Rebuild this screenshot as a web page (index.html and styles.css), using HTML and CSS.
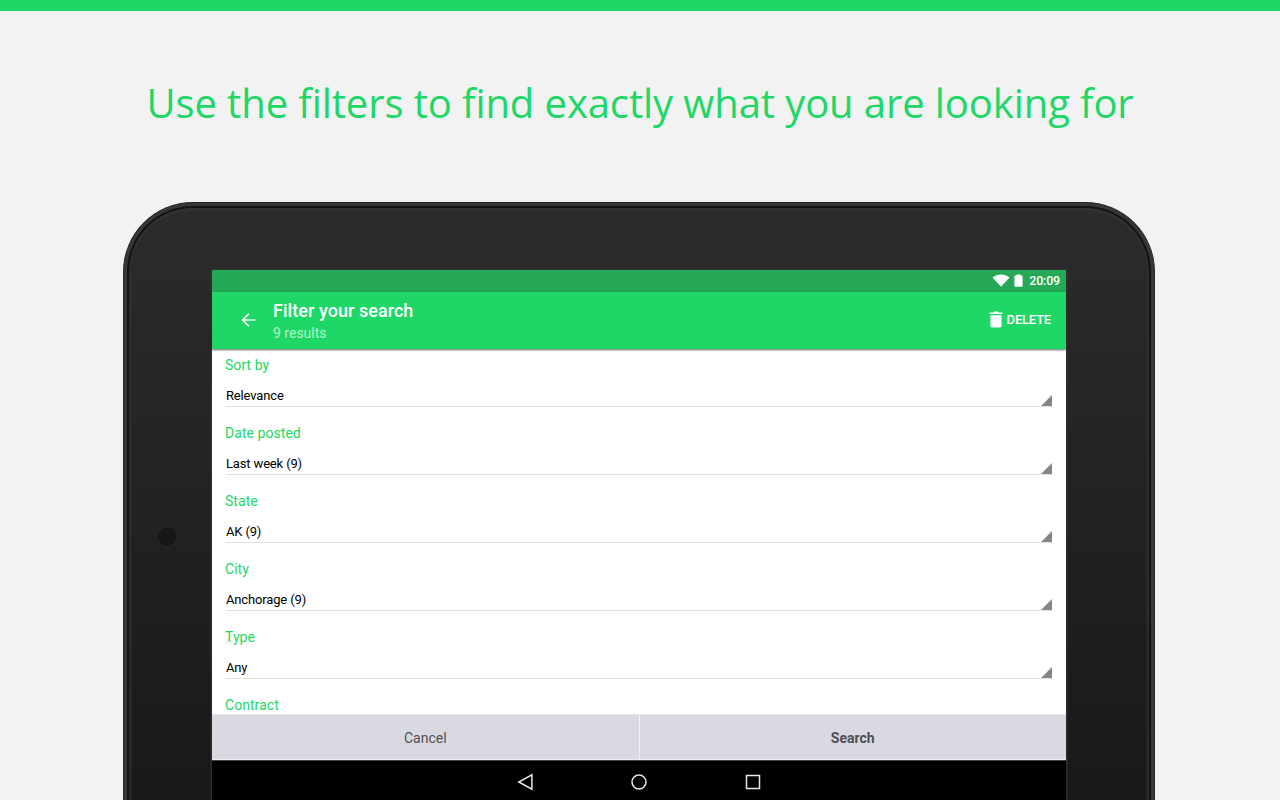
FILE: index.html
```html
<!DOCTYPE html>
<html lang="en">
  <head>
    <meta charset="UTF-8" />
    <meta name="viewport" content="width=device-width, initial-scale=1" />
    <title>Filter your search</title>
    <link rel="stylesheet" href="styles.css">
  </head>
  <body>
    <h1>Use the filters to find exactly what you are looking for</h1>

    <div class="tablet">
      <div class="bezel">
        <div class="camera"></div>

        <div class="screen">
          <div class="status-bar">
            <svg class="wifi" width="18" height="13" viewBox="0 0 18 13">
              <path d="M0.5 3.4C5.5-0.5 12.5-0.5 17.5 3.4L9 12.8z" fill="#fff" />
            </svg>
            <svg class="battery" width="9" height="13" viewBox="0 0 9 13">
              <path d="M2.4 0.4h4.2v1.1H8a0.6 0.6 0 0 1 0.6 0.6v10a0.6 0.6 0 0 1-0.6 0.6H1a0.6 0.6 0 0 1-0.6-0.6v-10A0.6 0.6 0 0 1 1 1.5h1.4z" fill="#fff" />
            </svg>
            <span>20:09</span>
          </div>

          <header class="toolbar">
            <svg class="back" width="16" height="16" viewBox="0 0 16 16" fill="none" stroke="#fff" stroke-width="1.7">
              <path d="M14.4 8H1.8M7.8 1.8L1.6 8l6.2 6.2" />
            </svg>
            <div class="titles">
              <h2>Filter your search</h2>
              <p>9 results</p>
            </div>
            <button class="delete">
              <svg width="14" height="17" viewBox="0 0 14 17" fill="#fff">
                <path d="M0.5 1.4h3.8L5.2 0.5h3.6l0.9 0.9h3.8v1.7H0.5zM1.4 4.2h11.2v10.6a1.7 1.7 0 0 1-1.7 1.7H3.1a1.7 1.7 0 0 1-1.7-1.7z" />
              </svg>
              DELETE
            </button>
          </header>

          <main class="filters">
            <div class="filter">
              <div class="label">Sort by</div>
              <div class="spinner"><span>Relevance</span></div>
            </div>
            <div class="filter">
              <div class="label">Date posted</div>
              <div class="spinner"><span>Last week (9)</span></div>
            </div>
            <div class="filter">
              <div class="label">State</div>
              <div class="spinner"><span>AK (9)</span></div>
            </div>
            <div class="filter">
              <div class="label">City</div>
              <div class="spinner"><span>Anchorage (9)</span></div>
            </div>
            <div class="filter">
              <div class="label">Type</div>
              <div class="spinner"><span>Any</span></div>
            </div>
            <div class="filter">
              <div class="label">Contract</div>
            </div>
          </main>

          <div class="actions">
            <button>Cancel</button>
            <button class="search">Search</button>
          </div>

          <nav class="nav-bar">
            <svg width="18" height="18" viewBox="0 0 18 18">
              <path d="M15.9 1.8v14.4L2.8 9z" />
            </svg>
            <svg width="18" height="18" viewBox="0 0 18 18">
              <circle cx="9" cy="9" r="7" />
            </svg>
            <svg width="18" height="18" viewBox="0 0 18 18">
              <rect x="2.5" y="2.5" width="13" height="13" />
            </svg>
          </nav>
        </div>
      </div>
    </div>
  </body>
</html>
```

FILE: styles.css
```css
* {
  box-sizing: border-box;
}

body {
  margin: 0;
  border-top: 11px solid #1ed766;
  background: #f2f2f2;
  font-family: Roboto, sans-serif;
}

h1,
h2,
p {
  margin: 0;
  font-weight: 400;
}

h1 {
  height: 191px;
  padding-top: 64px;
  font-family: "Open Sans", sans-serif;
  font-size: 40px;
  line-height: 56px;
  letter-spacing: -0.1px;
  text-align: center;
  white-space: nowrap;
  color: #1ed766;
}

button {
  padding: 0;
  border: 0;
  background: none;
  font-family: inherit;
}

/* Device frame */
.tablet {
  width: 1032px;
  height: 598px;
  margin-left: 123px;
  padding: 3px 3px 0;
  border: 1px solid #262626;
  border-bottom: 0;
  border-radius: 70px 70px 0 0;
  background: #373737;
}

.bezel {
  display: flex;
  align-items: flex-start;
  height: 594px;
  padding: 62px 0 0 29px;
  border: 2px solid #141414;
  border-bottom: 0;
  border-radius: 66px 66px 0 0;
  background: linear-gradient(#2c2c2c, #232323 270px, #191919 590px);
  box-shadow: inset 0 3px 3px -1px #373737, inset 3px 0 3px -1px #303030,
    inset -3px 0 3px -1px #303030;
}

.camera {
  width: 19px;
  height: 19px;
  margin: 257px 35px 0 0;
  border-radius: 50%;
  background: #171717;
  box-shadow: 0 0 1px 1px #292929;
}

.screen {
  display: flex;
  flex-direction: column;
  width: 854px;
  height: 530px;
  background: #fff;
  box-shadow: 0 0 2px 1px #353535;
}

/* Status bar and toolbar */
.status-bar {
  display: flex;
  justify-content: flex-end;
  align-items: center;
  height: 22px;
  padding-right: 6px;
  background: #25a957;
  color: #fff;
  font-size: 12.5px;
  font-weight: 500;
  line-height: 22px;
  letter-spacing: -0.2px;
}

.wifi {
  margin: 0 4px 1px 0;
}

.battery {
  margin: 0 6px 1px 0;
}

.toolbar {
  display: flex;
  align-items: center;
  height: 57px;
  padding: 0 15px 1px 29px;
  background: #1ed766;
  box-shadow: 0 1px 2px rgba(0, 0, 0, 0.6);
  color: #fff;
  z-index: 1;
}

.titles {
  flex: 1;
  margin-left: 16px;
  padding-top: 3px;
}

.titles h2 {
  font-size: 18px;
  font-weight: 500;
  line-height: 22px;
  letter-spacing: 0.05px;
}

.titles p {
  font-size: 14px;
  line-height: 22px;
  color: #b4f2cb;
}

.delete {
  display: flex;
  align-items: center;
  gap: 4px;
  padding-bottom: 1px;
  color: #fff;
  font-size: 13px;
  font-weight: 500;
  letter-spacing: -0.2px;
}

/* Filter list */
.filters {
  height: 365px;
  padding: 0 14px;
  overflow: hidden;
}

.filter {
  height: 68px;
  padding-top: 8px;
}

.label {
  margin-left: -1px;
  font-size: 14px;
  line-height: 16px;
  letter-spacing: 0.05px;
  color: #1ed766;
}

.spinner {
  display: flex;
  justify-content: space-between;
  align-items: flex-end;
  height: 34px;
  border-bottom: 1px solid #e1e1e1;
  font-size: 13px;
  line-height: 20px;
  letter-spacing: -0.15px;
  color: #000;
}

.spinner::after {
  content: "";
  width: 11px;
  height: 11px;
  background: #868686;
  clip-path: polygon(100% 0, 100% 100%, 0 100%);
}

/* Bottom buttons */
.actions {
  display: flex;
  height: 46px;
  border-top: 1px solid #e4e4e8;
  border-bottom: 1px solid #eeeef1;
  background: #d9d9e2;
}

.actions button {
  flex: 1;
  padding-top: 2px;
  font-size: 14px;
  color: #505054;
}

.actions .search {
  border-left: 1px solid #f2f2f5;
  font-weight: 700;
}

.nav-bar {
  display: flex;
  justify-content: center;
  align-items: center;
  gap: 96px;
  height: 40px;
  padding-top: 3px;
  border-top: 1px solid #444;
  background: #000;
}

.nav-bar svg {
  fill: none;
  stroke: #e8e8e8;
  stroke-width: 1.5;
}
```
